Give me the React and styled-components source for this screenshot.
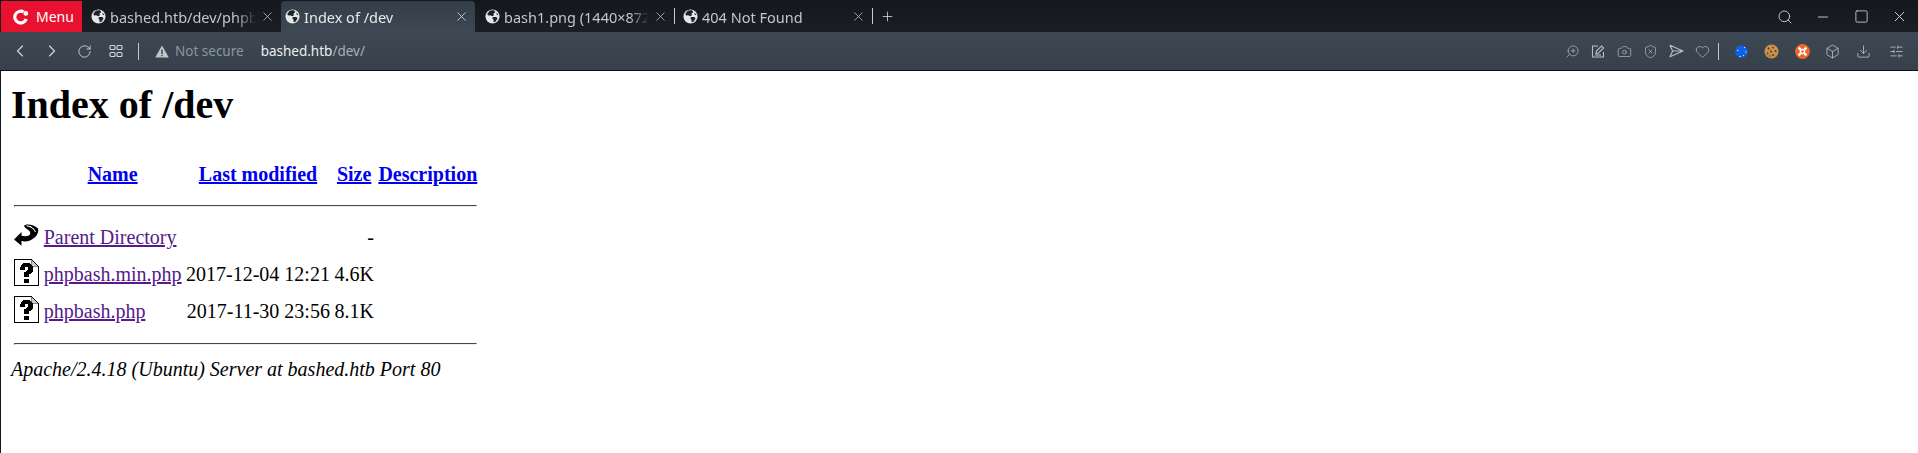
import React from "react";
import styled, { createGlobalStyle } from "styled-components";
import {
  ChevronLeft, ChevronRight, RotateCw, Search, Minus, Square, X, Plus, ZoomIn, Camera, ShieldX,
  Heart, Box, Download, SlidersHorizontal, SquarePen,
} from "lucide-react";

const Global = createGlobalStyle`
  html, body { margin: 0; padding: 0; background: #fff; overflow: hidden; }
  #root { height: 453px; }
`;

const Window = styled.div`
  width: 1918px;
  height: 453px;
  display: flex;
  flex-direction: column;
  overflow: hidden;
`;

const TabStrip = styled.div`
  height: 32px;
  flex: none;
  display: flex;
  align-items: stretch;
  padding: 1px 0 0 1px;
  box-sizing: border-box;
  background: linear-gradient(#14171b, #1b1f24);
  font: 14.5px "Noto Sans", sans-serif;
`;

const MenuButton = styled.div`
  width: 81px;
  display: flex;
  align-items: center;
  padding-left: 10px;
  gap: 5px;
  box-sizing: border-box;
  background: #e8112f;
  color: #fff;
  font-size: 14px;
`;

const Tab = styled.div`
  width: ${(p) => p.$w}px;
  flex: none;
  display: flex;
  align-items: center;
  box-sizing: border-box;
  padding: 0 ${(p) => p.$pr}px 0 ${(p) => p.$pl}px;
  gap: 4px;
  color: ${(p) => (p.$active ? "#e6e9ec" : "#c4c6c8")};
  background: ${(p) => (p.$active ? "linear-gradient(#343e49, #3d4854)" : "transparent")};
  border-radius: ${(p) => (p.$active ? "4px 4px 0 0" : "0")};
`;

const TabTitle = styled.span`
  flex: 1;
  min-width: 0;
  white-space: nowrap;
  overflow: hidden;
  -webkit-mask-image: linear-gradient(to right, #000 calc(100% - 20px), transparent);
  mask-image: linear-gradient(to right, #000 calc(100% - 20px), transparent);
`;

const TabDivider = styled.div`
  width: 1px;
  height: 16px;
  flex: none;
  align-self: center;
  margin-bottom: 1px;
  background: #c8cacc;
`;

const NewTab = styled.div`
  flex: none;
  display: flex;
  align-items: center;
  padding-left: 7px;
  color: #e6e8ea;
`;

const WindowControls = styled.div`
  margin-left: auto;
  display: flex;
  align-items: center;
  padding-right: 0;
  color: #d8dadc;
`;

const ControlSlot = styled.div`
  width: 38px;
  display: flex;
  align-items: center;
  justify-content: center;
`;

const Toolbar = styled.div`
  height: 38px;
  flex: none;
  display: flex;
  align-items: center;
  padding-left: 4px;
  box-sizing: border-box;
  background: linear-gradient(#3d4854, #36414b);
  color: #d5d9dd;
  font: 13.5px "Noto Sans", sans-serif;
`;

const NavSlot = styled.div`
  width: 32px;
  height: 32px;
  flex: none;
  display: flex;
  align-items: center;
  justify-content: center;
`;

const ToolDivider = styled.div`
  width: 1px;
  height: 17px;
  flex: none;
  background: #c4c8cc;
  margin: ${(p) => p.$m};
`;

const Security = styled.div`
  display: flex;
  align-items: center;
  gap: 6px;
  color: #8d959d;
  margin-left: 16px;
`;

const Address = styled.div`
  margin-left: 17px;
  color: #a9b0b7;
`;

const Host = styled.span`
  color: #eceef0;
`;

const ToolRight = styled.div`
  margin-left: auto;
  display: flex;
  align-items: center;
  color: #b9bec3;
  padding-right: 6px;
`;

const ToolSlot = styled.div`
  width: ${(p) => p.$w}px;
  flex: none;
  display: flex;
  align-items: center;
  justify-content: center;
  color: ${(p) => p.$c || "inherit"};
`;

const Rule = styled.div`
  height: 1px;
  flex: none;
  background: #0d0f12;
`;

const Page = styled.div`
  flex: 1;
  min-height: 0;
  overflow: hidden;
  background: #fff;
  border-left: 1px solid #15181c;
  color: #000;
  font-family: "Liberation Serif", "Times New Roman", serif;
  font-size: 16px;
  zoom: 1.25;
`;

const Body = styled.div`
  margin: 8px;
`;

const Heading = styled.h1`
  font-size: 2em;
  font-weight: bold;
  margin: 0.67em 0;
  margin-top: 0;
  padding-top: 0.0em;
`;

const Listing = styled.table`
  border-collapse: separate;
  border-spacing: 2px;
  font-size: 16px;
`;

const Head = styled.th`
  padding: 1px;
  vertical-align: ${(p) => (p.$top ? "top" : "middle")};
  text-align: center;
`;

const Cell = styled.td`
  padding: 1px;
  vertical-align: ${(p) => (p.$top ? "top" : "middle")};
  text-align: ${(p) => (p.$right ? "right" : "left")};
`;

const Link = styled.a`
  color: ${(p) => (p.$visited ? "#551a8b" : "#0000ee")};
  text-decoration: underline;
`;

const Line = styled.hr`
  display: block;
  margin: 8px 0;
  border: 1px inset #9a9a9a;
  box-sizing: content-box;
  height: 0;
  border-color: #9a9a9a #eee #eee #9a9a9a;
`;

const Signature = styled.address`
  font-style: italic;
  display: block;
`;

const IconBox = styled.svg`
  display: inline-block;
  width: 20px;
  height: 22px;
  vertical-align: baseline;
`;

const Globe = () => (
  <svg width="15" height="15" viewBox="0 0 16 16" style={{ flex: "none" }}>
    <circle cx="8" cy="8" r="7.5" fill="#e4e6e8" />
    <path d="M5.2 1.6 9.5 1.2 11 3.2 9 5 9.6 6.6 7.6 7.6 5.4 6.6 3.4 6.8 2.4 5.2ZM8.5 8.6 12 8.4 13.4 9.8 11.4 13.2 9.2 14 9 11.2 7.8 10ZM12.2 3.6 14.4 6 12.6 6.4Z" fill="#1d2126" />
  </svg>
);

const GridIcon = () => (
  <svg width="14" height="14" viewBox="0 0 14 14" fill="none" stroke="currentColor" strokeWidth="1.1">
    <rect x="1" y="1.5" width="5" height="4" rx="1" />
    <rect x="8" y="1.5" width="5" height="4" rx="1" />
    <rect x="1" y="8.5" width="5" height="4" rx="1" />
    <rect x="8" y="8.5" width="5" height="4" rx="1" />
  </svg>
);

const Warning = () => (
  <svg width="14" height="13" viewBox="0 0 14 13">
    <path d="M7 .5 13.8 12.5H.2Z" fill="#c2c6ca" />
    <rect x="6.3" y="4.5" width="1.4" height="4.4" fill="#3a4550" />
    <rect x="6.3" y="9.8" width="1.4" height="1.4" fill="#3a4550" />
  </svg>
);

const OperaLogo = () => (
  <svg width="20" height="20" viewBox="0 0 20 20">
    <path d="M13.5 3.6A7.5 7.5 0 1 0 16.8 12.6L13.7 11.6A4.3 4.3 0 1 1 11.6 6.2Z" fill="#fff" />
    <circle cx="14.8" cy="6.4" r="2.4" fill="#fff" />
  </svg>
);

const SendIcon = () => (
  <svg width="15" height="14" viewBox="0 0 15 14" fill="none" stroke="currentColor" strokeWidth="1.1" strokeLinejoin="round">
    <path d="M1 1.2 14 7 1 12.8 3.6 7ZM3.6 7H14" />
  </svg>
);

const BlueBall = () => (
  <svg width="13" height="13" viewBox="0 0 13 13">
    <circle cx="6.5" cy="6.5" r="6.3" fill="#0d62e6" />
    <path d="M2 5h1.4v1H2zM9 2h1v1H9zM10.2 6.6h1.4v1h-1.4zM4.4 11h1.4v1H4.4zM8 10h1v1H8z" fill="#cfe2ff" />
  </svg>
);

const Cookie = () => (
  <svg width="15" height="15" viewBox="0 0 15 15">
    <circle cx="7.5" cy="7.5" r="7" fill="#c8924e" />
    <g fill="#5a3718">
      <circle cx="4.6" cy="4.6" r="1" /><circle cx="9" cy="3.6" r=".9" /><circle cx="11.6" cy="7" r="1" />
      <circle cx="7" cy="7.6" r="1" /><circle cx="3.6" cy="9.4" r=".9" /><circle cx="9" cy="11" r="1" /><circle cx="5.8" cy="12" r=".7" />
    </g>
  </svg>
);

const Lifebuoy = () => (
  <svg width="15" height="15" viewBox="0 0 15 15">
    <circle cx="7.5" cy="7.5" r="7.4" fill="#f0672a" />
    <circle cx="7.5" cy="7.5" r="2" fill="#f0672a" stroke="#fff" strokeWidth="1.4" />
    <path d="m2.8 4.4 1.6-1.6 2 2-1.6 1.6zM10.6 2.8l1.6 1.6-2 2-1.6-1.6zM2.8 10.6l2-2 1.6 1.6-2 2zM8.6 10.2l1.6-1.6 2 2-1.6 1.6z" fill="#fff" />
  </svg>
);

const NoteEdit = () => (
  <svg width="14" height="14" viewBox="0 0 14 14" fill="none" stroke="currentColor" strokeWidth="1.1">
    <path d="M7 2H1.5v11h11V8M5 9.5l.6-2.6L10.5 2 12.6 4 7.6 9Z" />
    <path d="M4 11h6" />
  </svg>
);

const UnknownIcon = () => (
  <IconBox viewBox="0 0 20 22" shapeRendering="crispEdges">
    <path d="M.5.5H14L19.5 6V21.5H.5Z" fill="#fff" stroke="#000" />
    <path d="M14 .5V6H19.5" fill="#ccc" stroke="#888" />
    <path d="M5 6.5 7 3.5H12.5L15 6V10.5L12 12.5V14.5H8V11L11 9V6.5H9V8.5H5ZM8 16H12V19.5H8Z" fill="#000" />
  </IconBox>
);

const ParentIcon = () => (
  <IconBox viewBox="0 0 20 22">
    <path d="M8 3C10 1 16 2 19 5 20 7 19 10 17 12 13 16 8 16 6 15V19L0 14 6 8 6 11C10 12 13 11 13 9 13 6 9 6 8 3Z" fill="#000" />
    <path d="M10 3 14 4M12.5 3.4 15.6 5.6M15.4 5 17.2 8" stroke="#fff" strokeWidth=".8" fill="none" />
  </IconBox>
);

const rows = [
  { icon: <ParentIcon />, name: "Parent Directory", date: "\u00a0", size: "-" },
  { icon: <UnknownIcon />, name: "phpbash.min.php", date: "2017-12-04 12:21", size: "4.6K" },
  { icon: <UnknownIcon />, name: "phpbash.php", date: "2017-11-30 23:56", size: "8.1K" },
];

export default function App() {
  return (
    <Window>
      <Global />
      <TabStrip>
        <MenuButton><OperaLogo />Menu</MenuButton>
        <Tab $w={199} $pl={9} $pr={6}><Globe /><TabTitle>bashed.htb/dev/phpbash.min.php</TabTitle><X size={15} strokeWidth={1.2} /></Tab>
        <Tab $w={194} $pl={4} $pr={6} $active><Globe /><TabTitle>Index of /dev</TabTitle><X size={15} strokeWidth={1.2} /></Tab>
        <Tab $w={199} $pl={10} $pr={6}><Globe /><TabTitle>bash1.png (1440×872 pixels)</TabTitle><X size={15} strokeWidth={1.2} /></Tab>
        <TabDivider />
        <Tab $w={197} $pl={8} $pr={6}><Globe /><TabTitle>404 Not Found</TabTitle><X size={15} strokeWidth={1.2} /></Tab>
        <TabDivider />
        <NewTab><Plus size={15} strokeWidth={1.2} /></NewTab>
        <WindowControls>
          <ControlSlot><Search size={16} strokeWidth={1.3} /></ControlSlot>
          <ControlSlot><Minus size={16} strokeWidth={1.3} /></ControlSlot>
          <ControlSlot><Square size={15} strokeWidth={1.3} /></ControlSlot>
          <ControlSlot><X size={17} strokeWidth={1.3} /></ControlSlot>
        </WindowControls>
      </TabStrip>
      <Toolbar>
        <NavSlot><ChevronLeft size={20} strokeWidth={1.3} /></NavSlot>
        <NavSlot><ChevronRight size={20} strokeWidth={1.3} /></NavSlot>
        <NavSlot><RotateCw size={15} strokeWidth={1.4} /></NavSlot>
        <NavSlot><GridIcon /></NavSlot>
        <ToolDivider $m="0 0 0 6px" />
        <Security><Warning />Not secure</Security>
        <Address><Host>bashed.htb</Host>/dev/</Address>
        <ToolRight>
          <ToolSlot $w={26}><ZoomIn size={15} strokeWidth={1.1} style={{ transform: "scaleX(-1)" }} /></ToolSlot>
          <ToolSlot $w={26}><NoteEdit /></ToolSlot>
          <ToolSlot $w={26}><Camera size={15} strokeWidth={1.1} /></ToolSlot>
          <ToolSlot $w={26}><ShieldX size={15} strokeWidth={1.1} /></ToolSlot>
          <ToolSlot $w={26}><SendIcon /></ToolSlot>
          <ToolSlot $w={26}><Heart size={15} strokeWidth={1.1} /></ToolSlot>
          <ToolDivider $m="0 7px 0 3px" />
          <ToolSlot $w={30}><BlueBall /></ToolSlot>
          <ToolSlot $w={30}><Cookie /></ToolSlot>
          <ToolSlot $w={32}><Lifebuoy /></ToolSlot>
          <ToolSlot $w={29} $c="#d5d9dd"><Box size={15} strokeWidth={1.1} /></ToolSlot>
          <ToolSlot $w={33} $c="#d5d9dd"><Download size={15} strokeWidth={1.1} /></ToolSlot>
          <ToolSlot $w={32} $c="#d5d9dd"><SlidersHorizontal size={15} strokeWidth={1.1} /></ToolSlot>
        </ToolRight>
      </Toolbar>
      <Rule />
      <Page>
        <Body>
          <Heading>Index of /dev</Heading>
          <Listing>
            <tbody>
              <tr>
                <Head $top><IconBox viewBox="0 0 20 22" /></Head>
                <Head><Link href="#">Name</Link></Head>
                <Head><Link href="#">Last modified</Link></Head>
                <Head><Link href="#">Size</Link></Head>
                <Head><Link href="#">Description</Link></Head>
              </tr>
              <tr><Head colSpan={5}><Line /></Head></tr>
              {rows.map((r) => (
                <tr key={r.name}>
                  <Cell $top>{r.icon}</Cell>
                  <Cell><Link $visited href="#">{r.name}</Link></Cell>
                  <Cell $right>{r.date}</Cell>
                  <Cell $right>{r.size}</Cell>
                  <Cell>{"\u00a0"}</Cell>
                </tr>
              ))}
              <tr><Head colSpan={5}><Line /></Head></tr>
            </tbody>
          </Listing>
          <Signature>Apache/2.4.18 (Ubuntu) Server at bashed.htb Port 80</Signature>
        </Body>
      </Page>
    </Window>
  );
}
